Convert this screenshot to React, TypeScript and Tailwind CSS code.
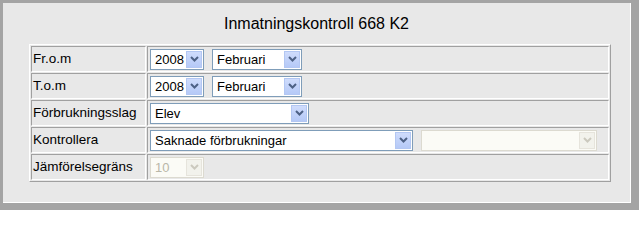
import React from "react";

type SelectProps = {
  value: string;
  width: string;
  disabled?: boolean;
};

function Chevron({ disabled }: { disabled?: boolean }) {
  return (
    <svg width="9" height="6" viewBox="0 0 9 6" className="block">
      <path
        d="M1 1 L4.5 4.5 L8 1"
        fill="none"
        stroke={disabled ? "#cbc9be" : "#4d6185"}
        strokeWidth="2"
      />
    </svg>
  );
}

function FakeSelect({ value, width, disabled }: SelectProps) {
  return (
    <div
      className={`${width} h-[21px] flex items-stretch border ${
        disabled ? "border-[#dcdad0] bg-[#fbfbf6]" : "border-[#7f9db9] bg-white"
      }`}
    >
      <div
        className={`flex-1 flex items-center pl-[4px] text-[13px] leading-none ${
          disabled ? "text-[#b9b7a8]" : "text-black"
        }`}
      >
        {value}
      </div>
      <div
        className={`w-[16px] my-[1px] mr-[1px] flex items-center justify-center ${
          disabled
            ? "bg-[#f2f2ec] border border-[#e6e4dc]"
            : "bg-gradient-to-b from-[#cfdcfc] to-[#b5c9f7] border border-[#b3c7f3]"
        }`}
      >
        <Chevron disabled={disabled} />
      </div>
    </div>
  );
}

const cellBorder =
  "border border-t-[#a0a0a0] border-l-[#a0a0a0] border-b-white border-r-white";

export default function App() {
  const rows = [
    {
      label: "Fr.o.m",
      content: (
        <div className="flex gap-[8px]">
          <FakeSelect value="2008" width="w-[54px]" />
          <FakeSelect value="Februari" width="w-[90px]" />
        </div>
      ),
    },
    {
      label: "T.o.m",
      content: (
        <div className="flex gap-[8px]">
          <FakeSelect value="2008" width="w-[54px]" />
          <FakeSelect value="Februari" width="w-[90px]" />
        </div>
      ),
    },
    {
      label: "Förbrukningsslag",
      content: <FakeSelect value="Elev" width="w-[159px]" />,
    },
    {
      label: "Kontrollera",
      content: (
        <div className="flex gap-[8px]">
          <FakeSelect value="Saknade förbrukningar" width="w-[263px]" />
          <FakeSelect value="" width="w-[176px]" disabled />
        </div>
      ),
    },
    {
      label: "Jämförelsegräns",
      content: <FakeSelect value="10" width="w-[54px]" disabled />,
    },
  ];

  return (
    <div
      className="w-[639px] h-[210px] bg-[#a4a4a4] pl-[3px] pt-[3px] pr-[8px] pb-[7px]"
      style={{ fontFamily: '"Liberation Sans", Arial, sans-serif' }}
    >
      <div className="h-full bg-[#e8e8e8] border-r border-b border-r-white border-b-white">
        <div className="pt-[12px] text-center text-[16px] leading-[18px] text-black">
          Inmatningskontroll 668 K2
        </div>
        <table className="ml-[26px] mt-[11px] w-[582px] border-separate border-spacing-[1px] border border-t-white border-l-white border-r-[#a0a0a0] border-b-[#a0a0a0]">
          <tbody>
            {rows.map((r) => (
              <tr key={r.label}>
                <td
                  className={`${cellBorder} w-[115px] h-[26px] pl-[1px] align-middle text-[13.5px] leading-[16px] text-black`}
                >
                  {r.label}
                </td>
                <td className={`${cellBorder} h-[26px] pl-[2px] align-middle`}>
                  {r.content}
                </td>
              </tr>
            ))}
          </tbody>
        </table>
      </div>
    </div>
  );
}
